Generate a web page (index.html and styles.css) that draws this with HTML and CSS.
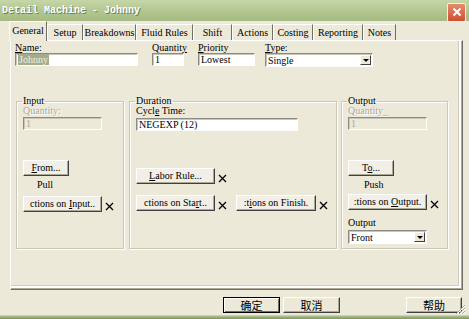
FILE: index.html
```html
<!DOCTYPE html>
<html lang="en">
<head>
    <meta charset="UTF-8">
    <title>Detail Machine - Johnny</title>
    <link rel="stylesheet" href="styles.css">
</head>
<body>

    <div class="window">
        <div class="titlebar">
            <span class="title">Detail Machine - Johnny</span>
            <span class="close">
                <svg width="10" height="10" viewBox="0 0 10 10">
                    <path d="M1.5 1.5L8.5 8.5M8.5 1.5L1.5 8.5" stroke="#fff" stroke-width="2"/>
                </svg>
            </span>
        </div>

        <div class="client">
            <!-- Tab strip -->
            <div class="tabs">
                <div class="tab active">General</div>
                <div class="tab">Setup</div>
                <div class="tab">Breakdowns</div>
                <div class="tab">Fluid Rules</div>
                <div class="tab">Shift</div>
                <div class="tab">Actions</div>
                <div class="tab">Costing</div>
                <div class="tab">Reporting</div>
                <div class="tab">Notes</div>
            </div>

            <div class="panel">
                <div class="fields">
                    <div class="field f-name">
                        <div class="lbl"><u>N</u>ame:</div>
                        <div class="edit"><span class="sel">Johnny</span></div>
                    </div>
                    <div class="field f-qty">
                        <div class="lbl">Quantit<u>y</u></div>
                        <div class="edit">1</div>
                    </div>
                    <div class="field f-prio">
                        <div class="lbl"><u>P</u>riority</div>
                        <div class="edit">Lowest</div>
                    </div>
                    <div class="field f-type">
                        <div class="lbl"><u>T</u>ype:</div>
                        <div class="combo"><span class="combo-text">Single</span><span class="arrow"></span></div>
                    </div>
                </div>

                <div class="groups">
                    <fieldset class="group g-input">
                        <legend>Input</legend>
                        <div class="lbl dim">Quantity:</div>
                        <div class="edit off w79">1</div>
                        <div class="btn b-small gap-from"><u>F</u>rom...</div>
                        <div class="note">Pull</div>
                        <div class="btn-pair gap-act">
                            <div class="btn b-wide">ctions on <u>I</u>nput..</div>
                            <svg class="xmark" width="9" height="9" viewBox="0 0 9 9"><path d="M1 1L8 8M8 1L1 8" stroke="#000" stroke-width="1.3"/></svg>
                        </div>
                    </fieldset>

                    <fieldset class="group g-duration">
                        <legend>Duration</legend>
                        <div class="lbl">Cycl<u>e</u> Time:</div>
                        <div class="edit cycle">NEGEXP (12)</div>
                        <div class="btn-pair gap-labor">
                            <div class="btn b-wide"><u>L</u>abor Rule...</div>
                            <svg class="xmark" width="9" height="9" viewBox="0 0 9 9"><path d="M1 1L8 8M8 1L1 8" stroke="#000" stroke-width="1.3"/></svg>
                        </div>
                        <div class="btn-row gap-start">
                            <div class="btn-pair">
                                <div class="btn b-wide">ctions on Sta<u>r</u>t..</div>
                                <svg class="xmark" width="9" height="9" viewBox="0 0 9 9"><path d="M1 1L8 8M8 1L1 8" stroke="#000" stroke-width="1.3"/></svg>
                            </div>
                            <div class="btn-pair">
                                <div class="btn b-finish">:t<u>i</u>ons on Finish.</div>
                                <svg class="xmark" width="9" height="9" viewBox="0 0 9 9"><path d="M1 1L8 8M8 1L1 8" stroke="#000" stroke-width="1.3"/></svg>
                            </div>
                        </div>
                    </fieldset>

                    <fieldset class="group g-output">
                        <legend>Output</legend>
                        <div class="lbl dim">Quantity_</div>
                        <div class="edit off w79">1</div>
                        <div class="btn b-small gap-from">T<u>o</u>...</div>
                        <div class="note push">Push</div>
                        <div class="btn-pair gap-out">
                            <div class="btn b-wide">:tions on <u>O</u>utput.</div>
                            <svg class="xmark" width="9" height="9" viewBox="0 0 9 9"><path d="M1 1L8 8M8 1L1 8" stroke="#000" stroke-width="1.3"/></svg>
                        </div>
                        <div class="lbl gap-outlbl">Output</div>
                        <div class="combo w79"><span class="combo-text">Front</span><span class="arrow"></span></div>
                    </fieldset>
                </div>
            </div>

            <div class="dlg-buttons">
                <div class="dlg-btn default">确定</div>
                <div class="dlg-btn">取消</div>
                <div class="dlg-btn help">帮助</div>
            </div>
        </div>

        <div class="frame-bottom"></div>

        <!-- size grip -->
        <svg class="grip" width="12" height="12" viewBox="0 0 12 12">
            <path d="M11 2L2 11M11 5L5 11M11 8L8 11" stroke="#aca899" stroke-width="1"/>
            <path d="M11 3L3 11M11 6L6 11M11 9L9 11" stroke="#fff" stroke-width="1"/>
        </svg>
    </div>

</body>
</html>
```

FILE: styles.css
```css
body {
    margin: 0;
    width: 469px;
    height: 319px;
    overflow: hidden;
    background-color: #ece9d8;
    font-family: "Liberation Serif", serif;
    font-size: 10px;
    color: #000;
}

.window {
    position: relative;
    display: flex;
    flex-direction: column;
    height: 319px;
}

/* Title bar */
.titlebar {
    height: 21px;
    flex: none;
    display: flex;
    align-items: center;
    justify-content: space-between;
    padding: 0 3px 0 2px;
    background: linear-gradient(#c6d6a8, #b0c48e 60%, #a6bb83);
}

.title {
    font: bold 10px "Liberation Mono", monospace;
    color: #fff;
    text-shadow: 1px 1px 0 #6f8050;
}

.close {
    width: 17px;
    height: 17px;
    margin-top: 3px;
    display: flex;
    align-items: center;
    justify-content: center;
    background: linear-gradient(#e88a6c, #cf4e2f);
    border: 1px solid #f4eee0;
    border-radius: 2px;
}

/* Client area */
.client {
    flex: 1;
    padding: 0 6px 0 10px;
}

.tabs {
    display: flex;
    align-items: flex-end;
    height: 19px;
    margin-left: -1px;
    position: relative;
    z-index: 1;
}

.tab {
    height: 16px;
    line-height: 15px;
    box-sizing: border-box;
    text-align: center;
    white-space: nowrap;
    border-top: 1px solid #fff;
    border-left: 1px solid #fff;
    border-right: 1px solid #716f64;
}

.tab:nth-child(1) { width: 38px; }
.tab:nth-child(2) { width: 36px; }
.tab:nth-child(3) { width: 53px; }
.tab:nth-child(4) { width: 57px; }
.tab:nth-child(5) { width: 39px; }
.tab:nth-child(6) { width: 41px; }
.tab:nth-child(7) { width: 40px; }
.tab:nth-child(8) { width: 50px; }
.tab:nth-child(9) { width: 33px; }

.tab.active {
    height: 20px;
    line-height: 17px;
    margin-bottom: -1px;
    background-color: #ece9d8;
}

.panel {
    height: 250px;
    box-sizing: border-box;
    padding-top: 2px;
    border: 1px solid;
    border-color: #fff #716f64 #716f64 #fff;
    box-shadow: inset -1px -1px 0 #aca899, inset -3px -3px 0 #fff, inset -4px -4px 0 #d0cdbf;
}

/* Top fields */
.fields {
    display: flex;
    margin-left: 4px;
}

.field-gap { width: 0; }

.f-name { width: 123px; }
.f-qty { width: 32px; margin-left: 14px; }
.f-prio { width: 57px; margin-left: 14px; }
.f-type { width: 108px; margin-left: 10px; }

.lbl {
    height: 10px;
    line-height: 10px;
    white-space: nowrap;
}

.lbl.dim {
    color: #aca899;
    text-shadow: 1px 1px 0 #fff;
}

.edit {
    height: 13px;
    box-sizing: border-box;
    line-height: 11px;
    padding-left: 2px;
    white-space: nowrap;
    overflow: hidden;
    background-color: #fff;
    border: 1px solid;
    border-color: #8d8b80 #fff #fff #8d8b80;
    box-shadow: inset 1px 1px 0 #c9c6b8;
}

.edit.off {
    background-color: #ece9d8;
    color: #aca899;
    margin-top: 1px;
}

.sel {
    background-color: #a3ad8c;
    color: #eef0e4;
    padding: 0 1px;
}

.combo {
    height: 14px;
    box-sizing: border-box;
    display: flex;
    align-items: center;
    justify-content: space-between;
    padding: 0 1px 0 2px;
    background-color: #fff;
    border: 1px solid;
    border-color: #8d8b80 #fff #fff #8d8b80;
    box-shadow: inset 1px 1px 0 #c9c6b8;
    line-height: 11px;
}

.arrow {
    width: 11px;
    height: 10px;
    box-sizing: border-box;
    background-color: #ece9d8;
    border: 1px solid;
    border-color: #fff #404040 #404040 #fff;
    position: relative;
}

.arrow::after {
    content: "";
    position: absolute;
    left: 2px;
    top: 3px;
    border-left: 3px solid transparent;
    border-right: 3px solid transparent;
    border-top: 3px solid #000;
}

.w79 { width: 79px; }

/* Group boxes */
.groups {
    display: flex;
    height: 153px;
    margin: 29px 0 0 5px;
}

.group {
    margin: 0;
    padding: 0 4px 0 6px;
    min-width: 0;
    box-sizing: border-box;
    border: 1px solid #cbc8b9;
    box-shadow: inset 1px 1px 0 #fff, 1px 1px 0 #fff;
}

.group legend {
    padding: 0 1px;
    margin-left: -1px;
    height: 10px;
    line-height: 10px;
}

.g-input { width: 108px; }
.g-duration { width: 208px; margin-left: 5px; }
.g-output { width: 107px; margin-left: 4px; }

.cycle {
    width: 162px;
    margin-top: 2px;
}

.btn {
    height: 16px;
    box-sizing: border-box;
    line-height: 13px;
    text-align: center;
    white-space: nowrap;
    overflow: hidden;
    background-color: #f1efe6;
    border: 1px solid;
    border-color: #fff #404040 #404040 #fff;
    box-shadow: inset -1px -1px 0 #aca899;
}

.b-small { width: 46px; }
.b-wide { width: 79px; }
.b-finish { width: 80px; }

.btn-pair {
    display: flex;
    align-items: flex-end;
    gap: 3px;
}

.btn-row {
    display: flex;
    gap: 9px;
}

.xmark {
    margin-bottom: 1px;
    flex: none;
}

.note {
    height: 10px;
    line-height: 10px;
    margin: 4px 0 0 14px;
}

.note.push { margin-left: 16px; }

.gap-from { margin-top: 30px; }
.gap-act { margin-top: 6px; }
.gap-out { margin-top: 4px; }
.gap-labor { margin-top: 37px; }
.gap-start { margin-top: 11px; }
.gap-outlbl { margin: 8px 0 2px; }

/* Dialog buttons */
.dlg-buttons {
    display: flex;
    gap: 3px;
    margin-top: 7px;
    padding-left: 213px;
}

.dlg-btn {
    width: 57px;
    height: 16px;
    box-sizing: border-box;
    text-align: center;
    font: 11px/14px "Noto Sans CJK SC", sans-serif;
    color: #000;
    background-color: #ece9d8;
    border: 1px solid;
    border-color: #fff #404040 #404040 #fff;
    box-shadow: inset -1px -1px 0 #aca899;
}

.dlg-btn.default {
    border-color: #000;
    box-shadow: inset 1px 1px 0 #fff, inset -1px -1px 0 #716f64;
}

.dlg-btn.help {
    width: 56px;
    margin-left: auto;
    margin-right: 1px;
}

.frame-bottom {
    height: 4px;
    flex: none;
    background: linear-gradient(#d2dfb8, #9bb276 50%, #7f9760);
}

.grip {
    position: absolute;
    right: 3px;
    bottom: 4px;
}
```
